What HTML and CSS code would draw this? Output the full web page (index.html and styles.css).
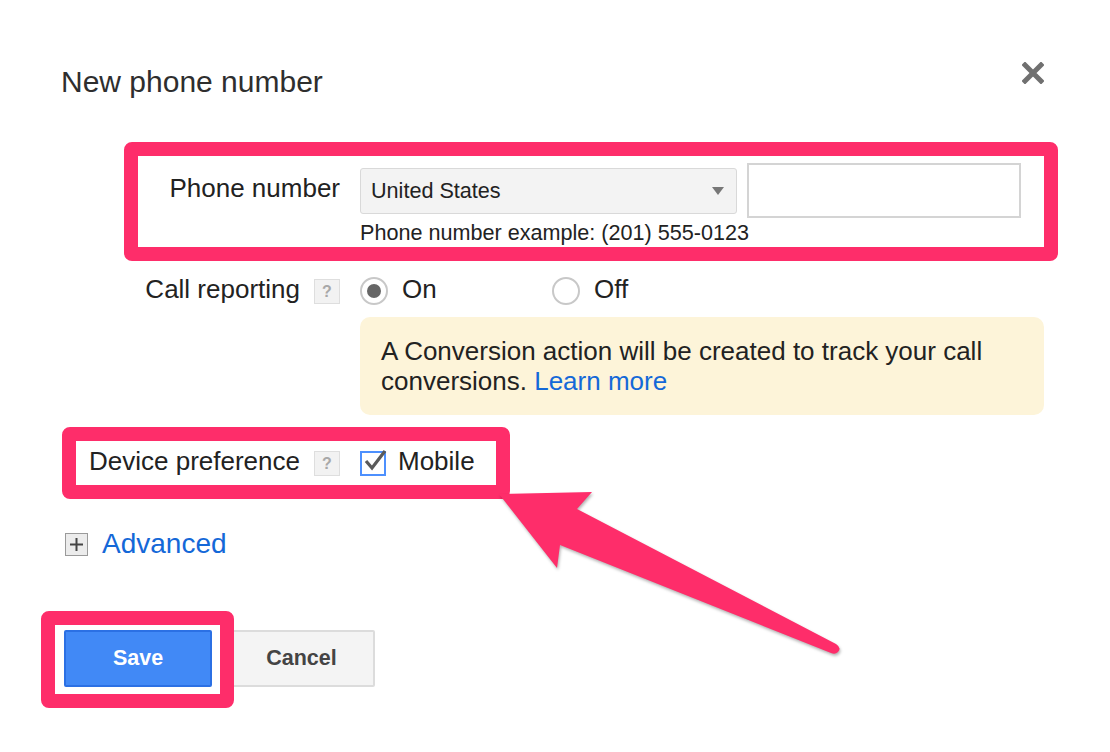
FILE: index.html
```html
<!DOCTYPE html>
<html>
<head>
<meta charset="utf-8">
<title>New phone number</title>
<link rel="stylesheet" href="styles.css">
</head>
<body>
<div class="page">
  <div class="dialog">
    <header class="head">
      <h1 class="title">New phone number</h1>
      <span class="close" aria-label="Close">
        <svg width="22" height="22" viewBox="0 0 22 22"><path d="M3 3 L19 19 M19 3 L3 19" stroke="#707070" stroke-width="5" stroke-linecap="square" fill="none"/></svg>
      </span>
    </header>

    <div class="row row-phone">
      <div class="label label-phone"><span class="ltext">Phone number</span></div>
      <div class="ctrl">
        <div class="phone-inputs">
          <div class="select"><span>United States</span><span class="caret"></span></div>
          <div class="input"></div>
        </div>
        <div class="hint">Phone number example: (201) 555-0123</div>
      </div>
    </div>

    <div class="row row-call">
      <div class="label"><span class="ltext">Call reporting</span><span class="help">?</span></div>
      <div class="ctrl radios">
        <div class="radio-opt first"><span class="radio checked"></span><span class="otext">On</span></div>
        <div class="radio-opt"><span class="radio"></span><span class="otext">Off</span></div>
      </div>
    </div>

    <div class="notice"><span>A Conversion action will be created to track your call</span> <span>conversions.</span> <a class="link">Learn more</a></div>

    <div class="row row-device">
      <div class="label"><span class="ltext">Device preference</span><span class="help">?</span></div>
      <div class="ctrl check-row">
        <span class="checkbox">
          <svg width="29" height="29" viewBox="0 0 29 29"><path d="M5 13 L11 20 L24 3" stroke="#5a5a5a" stroke-width="3.2" fill="none" stroke-linejoin="miter"/></svg>
        </span>
        <span class="otext">Mobile</span>
      </div>
    </div>

    <div class="advanced">
      <span class="plus">
        <svg width="23" height="23" viewBox="0 0 23 23"><rect x="0.5" y="0.5" width="22" height="22" fill="#ececec" stroke="#9a9a9a"/><path d="M5 11.5 H18 M11.5 5 V18" stroke="#444" stroke-width="2"/></svg>
      </span>
      <a class="link adv-link">Advanced</a>
    </div>

    <div class="buttons">
      <button class="btn btn-save">Save</button>
      <button class="btn btn-cancel">Cancel</button>
    </div>
  </div>

  <div class="hl hl-phone"></div>
  <div class="hl hl-device"></div>
  <div class="hl hl-save"></div>
  <svg class="arrow" width="1110" height="752" viewBox="0 0 1110 752">
    <path d="M499 494 L592 492 L577 509 L836 644 Q842 648 838 652 Q835 655 831 653 L560 545 L557 568 Z" fill="#fe2d6a"/>
  </svg>
</div>
</body>
</html>
```

FILE: styles.css
```css
* { box-sizing: border-box; }
html, body { margin: 0; padding: 0; background: #fff; }
body {
  width: 1110px;
  height: 752px;
  overflow: hidden;
  font-family: "Liberation Sans", Arial, Helvetica, sans-serif;
  color: #222;
}
.page { position: relative; width: 1110px; height: 752px; }
.dialog { padding: 64px 66px 0 0; }

.head { display: flex; justify-content: space-between; align-items: flex-start; }
.title {
  margin: 0 0 0 61px;
  font-size: 30px;
  line-height: 36px;
  font-weight: normal;
  color: #2e2e2e;
}
.close { display: block; margin-top: -2px; }
.close svg { display: block; }

.row { display: flex; align-items: flex-start; }
.label {
  width: 340px;
  display: flex;
  justify-content: flex-end;
  align-items: flex-start;
  gap: 14px;
  font-size: 26px;
  line-height: 30px;
}
.ctrl { margin-left: 20px; }

.row-phone { margin-top: 63px; }
.label-phone { margin-top: 10px; }
.phone-inputs { display: flex; align-items: center; gap: 10px; }
.select {
  width: 377px;
  height: 46px;
  background: #f3f3f3;
  border: 1px solid #d9d9d9;
  border-radius: 3px;
  display: flex;
  align-items: center;
  justify-content: space-between;
  padding: 0 12px 0 10px;
  font-size: 21.6px;
  color: #222;
}
.caret {
  width: 0;
  height: 0;
  border-left: 6.5px solid transparent;
  border-right: 6.5px solid transparent;
  border-top: 8px solid #777;
}
.input {
  width: 274px;
  height: 55px;
  background: #fff;
  border: 2px solid #d4d4d4;
}
.hint {
  margin-top: 2px;
  font-size: 21.6px;
  line-height: 26px;
  color: #222;
}

.help {
  width: 26px;
  height: 25px;
  background: #f2f2f2;
  border: 1px solid #dedede;
  color: #a8a8a8;
  font-size: 16px;
  line-height: 23px;
  text-align: center;
  font-weight: bold;
  flex: none;
}
.row-call { margin-top: 28px; }
.row-call .help { margin-top: 5px; }
.radios { display: flex; align-items: flex-start; }
.radio-opt {
  display: flex;
  align-items: flex-start;
  gap: 14px;
  font-size: 26px;
  line-height: 30px;
}
.radio-opt.first { width: 192px; }
.radio {
  width: 28px;
  height: 28px;
  border-radius: 50%;
  border: 2px solid #c8c8c8;
  background: #fff;
  margin-top: 3px;
  display: flex;
  align-items: center;
  justify-content: center;
  flex: none;
}
.radio.checked::after {
  content: "";
  width: 14px;
  height: 14px;
  border-radius: 50%;
  background: #666;
}

.notice {
  margin: 12px 0 0 360px;
  width: 684px;
  padding: 19px 21px;
  background: #fdf4d9;
  border-radius: 10px;
  font-size: 26px;
  line-height: 30px;
  color: #222;
}
.link { color: #1468d8; text-decoration: none; }

.row-device { margin-top: 31px; }
.row-device .help { margin-top: 5px; }
.check-row { display: flex; align-items: flex-start; font-size: 26px; line-height: 30px; }
.checkbox {
  position: relative;
  width: 26px;
  height: 25px;
  margin-top: 5px;
  border: 2px solid #4d90fe;
  background: #fff;
  flex: none;
}
.checkbox svg { position: absolute; left: -1px; top: -5px; }
.check-row .otext { margin-left: 12px; }

.advanced {
  margin: 52px 0 0 65px;
  display: flex;
  align-items: center;
  gap: 14px;
  font-size: 28px;
  line-height: 32px;
}
.plus svg { display: block; }

.buttons { margin: 70px 0 0 64px; display: flex; gap: 16px; }
.btn {
  height: 57px;
  font-family: "Liberation Sans", Arial, Helvetica, sans-serif;
  font-size: 21.5px;
  font-weight: bold;
  border-radius: 2px;
  padding: 0;
}
.btn-save {
  width: 148px;
  background: #4189f6;
  border: 2px solid #2b70e4;
  color: #fff;
}
.btn-cancel {
  width: 147px;
  background: #f4f4f4;
  border: 2px solid #dcdcdc;
  color: #444;
}

.hl {
  position: absolute;
  border: 14px solid #fe2d6a;
  border-radius: 8px;
  pointer-events: none;
}
.hl-phone { left: 124px; top: 142px; width: 934px; height: 119px; }
.hl-device { left: 62px; top: 427px; width: 448px; height: 72px; }
.hl-save { left: 41px; top: 611px; width: 193px; height: 97px; }
.arrow {
  position: absolute;
  left: 0;
  top: 0;
  pointer-events: none;
  filter: drop-shadow(1px 2px 1.5px rgba(0, 0, 0, 0.3));
}
```
